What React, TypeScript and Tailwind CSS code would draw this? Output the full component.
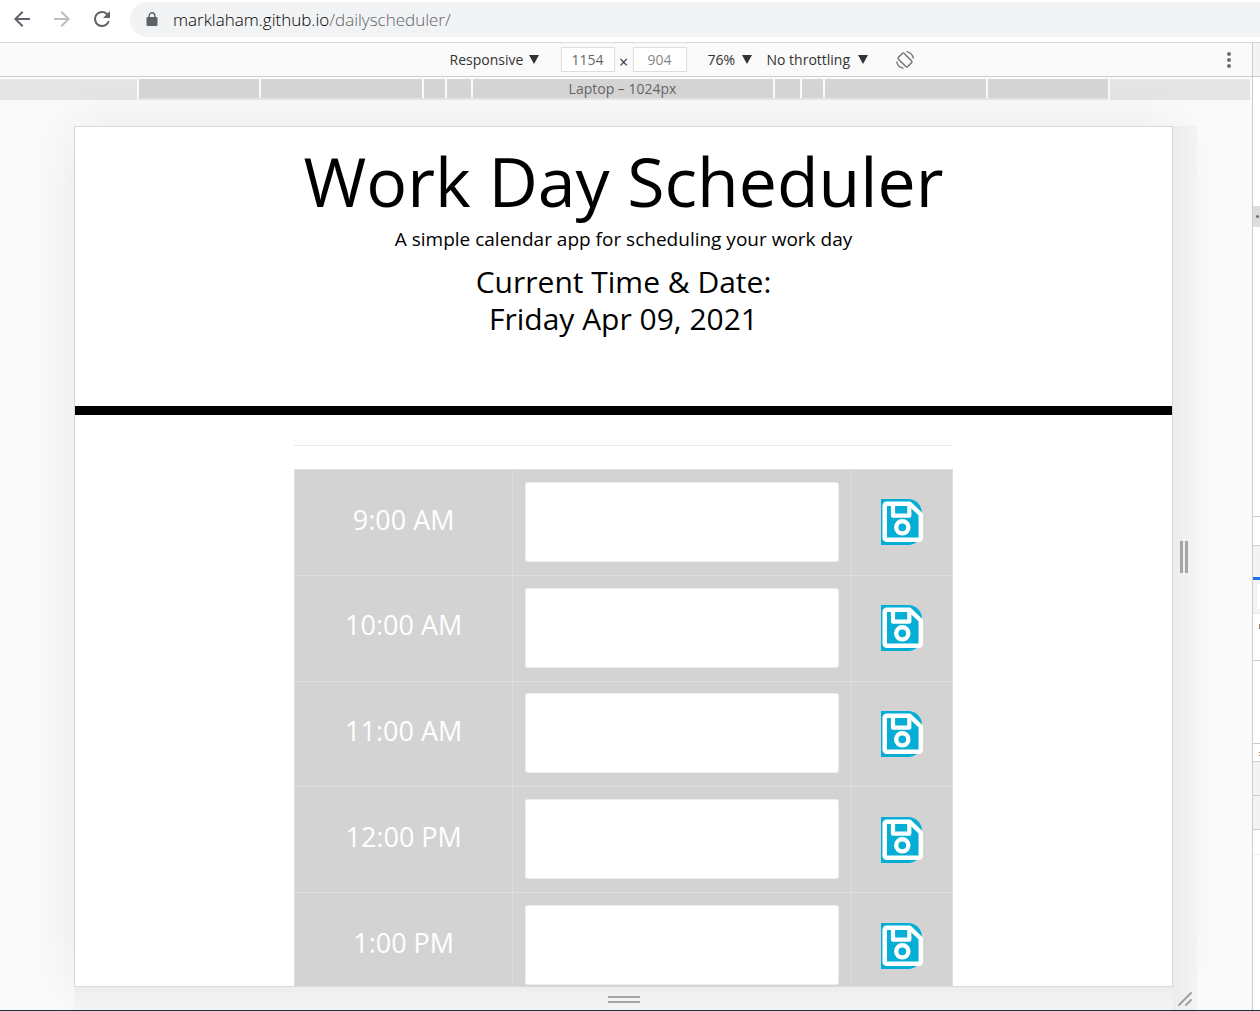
import type { ReactNode } from "react";

const hours = ["9:00 AM", "10:00 AM", "11:00 AM", "12:00 PM", "1:00 PM"];

function ArrowIcon({ flip = false }: { flip?: boolean }) {
  return (
    <svg viewBox="0 0 24 24" className={flip ? "size-6 rotate-180" : "size-6"} fill="currentColor" aria-hidden="true">
      <path d="M20 11H7.8l5.6-5.6L12 4l-8 8 8 8 1.4-1.4L7.8 13H20z" />
    </svg>
  );
}

function ReloadIcon() {
  return (
    <svg viewBox="0 0 24 24" className="size-6" fill="currentColor" aria-hidden="true">
      <path d="M17.65 6.35A7.96 7.96 0 0 0 12 4a8 8 0 1 0 7.73 10h-2.08A6 6 0 1 1 12 6c1.66 0 3.14.69 4.22 1.78L13 11h7V4z" />
    </svg>
  );
}

function LockIcon() {
  return (
    <svg viewBox="0 0 12 15" className="h-[15px] w-3" aria-hidden="true">
      <rect x="0.5" y="5" width="11" height="9" rx="1.2" fill="#5f6368" />
      <path d="M3.2 6V3.6a2.8 2.8 0 0 1 5.6 0V6" fill="none" stroke="#5f6368" strokeWidth="1.4" />
    </svg>
  );
}

function RotateIcon() {
  return (
    <svg viewBox="0 0 20 20" className="size-5" fill="none" stroke="#6e6e6e" strokeWidth="1.3" aria-hidden="true">
      <rect x="6" y="3.5" width="8" height="13" rx="1" transform="rotate(-45 10 10)" />
      <path d="M11.5 1.6a8.5 8.5 0 0 1 6.9 6.9M8.5 18.4a8.5 8.5 0 0 1-6.9-6.9" />
    </svg>
  );
}

function SaveIcon() {
  return (
    <svg viewBox="0 0 42 42" className="size-[42px] shrink-0" fill="none" stroke="#fff" strokeWidth="4.5" strokeLinejoin="round" aria-hidden="true">
      <path d="M4.7 2.8h23L38.8 13.5v23.3a2 2 0 0 1-2 2H4.700a2 2 0 0 1-2-2V4.800a2 2 0 0 1 2-2z" />
      <path d="M11 4v10.700h16.300V4" strokeWidth="4.2" />
      <circle cx="20.3" cy="26.3" r="6.1" strokeWidth="4.4" />
    </svg>
  );
}

function DropDown({ label, text, className }: { label: string; text: string; className: string }) {
  return (
    <span className="flex items-center gap-1">
      <select aria-label={label} className={`appearance-none bg-transparent ${className}`}>
        <option>{text}</option>
      </select>
      <svg viewBox="0 0 10 9" className="h-[9px] w-[10px]" fill="#333" aria-hidden="true">
        <path d="M0 0h10L5 9z" />
      </svg>
    </span>
  );
}

function DeviceBar() {
  return (
    <div className="flex h-[34px] shrink-0 items-center border-b border-[#ccc] text-sm text-[#333]">
      <div className="flex flex-1 justify-end pr-[22px]">
        <DropDown label="Device" text="Responsive" className="w-[75px]" />
      </div>
      <div className="flex items-center gap-1">
        <input aria-label="Width" defaultValue="1154" className="h-[25px] w-[54px] border border-[#ddd] bg-white text-center text-[#666]" />
        <span className="w-[10px] pt-1 text-center text-base leading-5">×</span>
        <input aria-label="Height" defaultValue="904" className="h-[25px] w-[54px] border border-[#ddd] bg-white text-center text-[#888]" />
      </div>
      <div className="flex flex-1 items-center pr-[6px] pl-[21px]">
        <DropDown label="Zoom" text="76%" className="w-[30px]" />
        <div className="ml-[15px] flex">
          <DropDown label="Throttling" text="No throttling" className="w-[87px]" />
        </div>
        <button aria-label="Rotate" className="ml-[27px]">
          <RotateIcon />
        </button>
        <button aria-label="More options" className="mr-[14px] ml-auto flex flex-col gap-[2px] p-px">
          <i className="size-1 rounded-full bg-[#6e6e6e]" />
          <i className="size-1 rounded-full bg-[#6e6e6e]" />
          <i className="size-1 rounded-full bg-[#6e6e6e]" />
        </button>
      </div>
    </div>
  );
}

function Segment({ className, children }: { className: string; children?: ReactNode }) {
  return <div className={`flex h-[19px] items-center justify-center bg-[#d5d5d5] ${className}`}>{children}</div>;
}

function Ruler() {
  return (
    <div className="mt-[2px] mr-[2px] flex h-[21px] shrink-0 gap-[2px] text-sm text-[#666]">
      <div className="flex-[136] bg-[#e5e5e5]" />
      <div className="flex gap-[2px] border-b-2 border-[#e5e5e5]">
        <Segment className="w-[120px]" />
        <Segment className="w-[161px]" />
        <Segment className="w-[21px]" />
        <Segment className="w-6" />
        <Segment className="w-[300px]">Laptop – 1024px</Segment>
        <Segment className="w-[25px]" />
        <Segment className="w-[21px]" />
        <Segment className="w-[161px]" />
        <Segment className="w-[120px]" />
      </div>
      <div className="flex-[140] bg-[#e5e5e5]" />
    </div>
  );
}

function SchedulerPage() {
  return (
    <div className="flex min-w-0 flex-1 flex-col overflow-hidden border border-[#d9d9d9] bg-white text-black shadow-[0_0_50px_rgba(0,0,0,0.07)]">
      <header className="h-[288px] shrink-0 border-b-[9px] border-black pt-[9px] text-center">
        <h1 className="text-[68px] leading-[90px]">Work Day Scheduler</h1>
        <p className="text-[19px] leading-[26px]">A simple calendar app for scheduling your work day</p>
        <p className="mt-[11px] text-[30px] leading-[37px]">
          Current Time &amp; Date:
          <br />
          Friday Apr 09, 2021
        </p>
      </header>
      <main className="mx-auto w-3/5 shrink-0 pt-[30px]">
        <hr className="border-[#e9e9e9]" />
        <table className="mt-[23px] h-[530px] w-full table-fixed border-collapse bg-[#d3d3d3]">
          <colgroup>
            <col className="w-[33.1%]" />
            <col />
            <col className="w-[15.3%]" />
          </colgroup>
          <tbody>
            {hours.map((hour) => (
              <tr key={hour}>
                <th scope="row" className="border border-[#dcdfe2] pb-[5px] text-[27px] font-normal text-white">
                  {hour}
                </th>
                <td className="border border-[#dcdfe2] px-3 pb-px">
                  <textarea aria-label={`Plans for ${hour}`} className="block h-20 w-full resize-none rounded-[3px] border border-[#ced4da]/40 bg-white p-2" />
                </td>
                <td className="border border-[#dcdfe2]">
                  <button aria-label={`Save ${hour}`} className="mx-auto flex h-[46px] w-[41px] items-center rounded-r-[14px] bg-[#06aed5] pl-px">
                    <SaveIcon />
                  </button>
                </td>
              </tr>
            ))}
          </tbody>
        </table>
      </main>
    </div>
  );
}

function SidePanel() {
  return (
    <aside className="flex w-2 shrink-0 flex-col overflow-hidden border-l border-[#ccc] bg-white">
      <div className="h-[34px] border-b border-[#ccc] bg-[#f3f3f3]" />
      <div className="h-[129px]" />
      <div className="flex h-[21px] items-center bg-[#dedede] pl-[3px]">
        <i className="size-[3px] rounded-full bg-[#6e6e6e]" />
      </div>
      <div className="h-[290px] border-b border-[#ccc]" />
      <div className="h-[29px] border-b border-[#ccc]" />
      <div className="h-[31px] bg-[#f3f3f3]" />
      <div className="h-[3px] bg-[#1a73e8]" />
      <div className="h-[34px] border-b border-[#e8e8e8] bg-[#f3f3f3] py-1 pl-1">
        <div className="h-[25px] bg-white" />
      </div>
      <div className="flex h-[47px] justify-end border-b border-[#ccc] pt-[10px]">
        <i className="h-[5px] w-px bg-[#a5805a]" />
      </div>
      <div className="h-[83px] border-b border-[#ccc]" />
      <div className="flex h-[18px] justify-end border-b border-[#ccc] pt-2">
        <i className="h-1 w-px border-y border-[#c07828]" />
      </div>
      <div className="h-[34px] border-b border-[#ccc] bg-[#f3f3f3]" />
      <div className="h-[34px] border-b border-[#ccc] bg-[#f3f3f3]" />
      <div className="h-[25px] border-b border-[#eee]" />
    </aside>
  );
}

export default function App() {
  return (
    <div className="flex h-screen flex-col overflow-hidden border-b border-[#1d2f40] bg-white font-['Open_Sans',sans-serif]">
      <nav aria-label="Browser" className="flex h-[43px] shrink-0 items-start border-b border-[#d9d9d9] pl-[10px] text-[#5f6368]">
        <div className="flex gap-4 pt-[7px]">
          <button aria-label="Back">
            <ArrowIcon />
          </button>
          <button aria-label="Forward" className="text-[#bbbdbf]">
            <ArrowIcon flip />
          </button>
          <button aria-label="Reload">
            <ReloadIcon />
          </button>
        </div>
        <div className="mt-[2px] ml-4 flex h-[35px] flex-1 items-center gap-[15px] rounded-l-full bg-[#f1f3f4] pl-4">
          <LockIcon />
          <a href="#" className="text-[17px] font-light">
            <span className="text-black">marklaham.github.io</span>/dailyscheduler/
          </a>
        </div>
      </nav>
      <div className="flex min-h-0 flex-1">
        <section aria-label="Device preview" className="flex min-w-0 flex-1 flex-col bg-[#fafafa]">
          <DeviceBar />
          <Ruler />
          <div className="mt-[26px] mr-[55px] ml-[74px] flex min-h-0 flex-1">
            <div className="flex min-w-0 flex-1 flex-col">
              <div className="flex min-h-0 flex-1">
                <SchedulerPage />
              </div>
              <div className="flex h-[23px] shrink-0 items-center justify-center bg-gradient-to-b from-[#ededed] to-[#f4f4f4] pt-px">
                <div className="h-[7px] w-8 border-y-2 border-[#a5a5a5]" />
              </div>
            </div>
            <div className="flex w-6 shrink-0 flex-col bg-gradient-to-r from-[#ececec] to-[#f4f4f4]">
              <div className="flex flex-1 items-center pl-[7px]">
                <div className="h-8 w-2 border-x-[3px] border-[#a5a5a5]" />
              </div>
              <svg viewBox="0 0 24 23" className="h-[23px] w-6" stroke="#a0a0a0" strokeWidth="2" strokeLinecap="round" aria-hidden="true">
                <path d="M6 18 18 6M13 18l5-5" />
              </svg>
            </div>
          </div>
        </section>
        <SidePanel />
      </div>
    </div>
  );
}
